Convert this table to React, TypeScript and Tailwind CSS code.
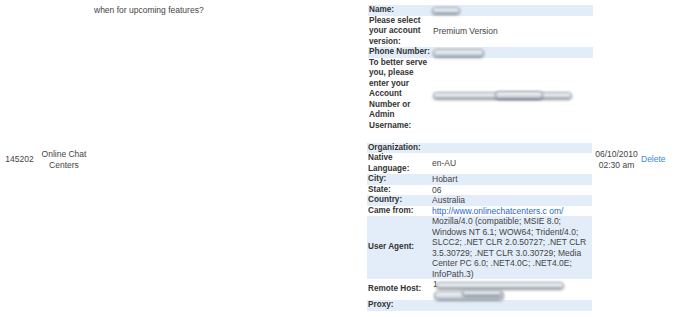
import { ReactNode } from "react";

type Field = {
  label: ReactNode;
  value?: ReactNode;
};

// redacted value, drawn as a soft smeared pill
const Smudge = ({ className }: { className: string }) => (
  <span
    className={`inline-block align-middle rounded-full border border-[#8d96a1] bg-gradient-to-b from-[#f4f6f8] via-[#dfe5eb] to-[#b9c1ca] blur-[0.9px] shadow-[0_1px_2px_rgba(0,0,0,0.4)] ${className}`}
  />
);

const firstFields: Field[] = [
  { label: "Name:", value: <Smudge className="w-[28px] h-[7px] -ml-[1px]" /> },
  {
    label: (
      <>
        Please select
        <br />
        your account
        <br />
        version:
      </>
    ),
    value: "Premium Version",
  },
  { label: "Phone Number:", value: <Smudge className="w-[51px] h-[8px]" /> },
  {
    label: (
      <>
        To better serve
        <br />
        you, please
        <br />
        enter your
        <br />
        Account
        <br />
        Number or
        <br />
        Admin
        <br />
        Username:
      </>
    ),
    value: (
      <span className="relative inline-block w-[140px] h-[10px] align-middle">
        <Smudge className="absolute left-0 top-[2px] w-[139px] h-[7px]" />
        <Smudge className="absolute left-[62px] top-[1px] w-[48px] h-[8px] from-[#d7e6f7] to-[#a9bfd6]" />
      </span>
    ),
  },
];

const secondFields: Field[] = [
  { label: "Organization:" },
  {
    label: (
      <>
        Native
        <br />
        Language:
      </>
    ),
    value: "en-AU",
  },
  { label: "City:", value: "Hobart" },
  { label: "State:", value: "06" },
  { label: "Country:", value: "Australia" },
  {
    label: "Came from:",
    value: (
      <a href="#" className="text-[#2b68cf]">
        http://www.onlinechatcenters.c om/
      </a>
    ),
  },
  {
    label: "User Agent:",
    value: (
      <>
        Mozilla/4.0 (compatible; MSIE 8.0;
        <br />
        Windows NT 6.1; WOW64; Trident/4.0;
        <br />
        SLCC2; .NET CLR 2.0.50727; .NET CLR
        <br />
        3.5.30729; .NET CLR 3.0.30729; Media
        <br />
        Center PC 6.0; .NET4.0C; .NET4.0E;
        <br />
        InfoPath.3)
      </>
    ),
  },
  {
    label: "Remote Host:",
    value: (
      <span className="relative block h-[21px]">
        <span className="absolute left-[1px] top-0 leading-[10.5px]">1</span>
        <Smudge className="absolute left-[4px] top-[3px] w-[128px] h-[7px]" />
        <Smudge className="absolute left-[2px] top-[12px] w-[70px] h-[9px] to-[#a9b2bc]" />
        <Smudge className="absolute left-[30px] top-[11px] w-[40px] h-[6px]" />
      </span>
    ),
  },
  { label: "Proxy:" },
];

const FieldTable = ({ fields }: { fields: Field[] }) => (
  <table className="w-[225px] border-collapse">
    <tbody>
      {fields.map((field, index) => (
        <tr key={index} className={index % 2 === 0 ? "bg-[#e2edf9]" : "bg-white"}>
          <td className="w-[65px] pl-[1px] p-0 align-middle whitespace-nowrap font-bold text-[8.2px] text-[#333]">
            {field.label}
          </td>
          <td className="p-0 align-middle whitespace-nowrap text-[8.5px] text-[#444]">
            {field.value ?? "\u00a0"}
          </td>
        </tr>
      ))}
    </tbody>
  </table>
);

export default function App() {
  return (
    <div className="w-[674px] h-[317px] overflow-hidden bg-white font-['Liberation_Sans',Arial,sans-serif] text-[8.5px] leading-[10.5px] text-[#444]">
      {/* previous message, cut at the top */}
      <div className="flex items-start pt-[5px]">
        <div className="w-[92px]" />
        <div className="w-[276px] pl-[2px]">when for upcoming features?</div>
        <FieldTable fields={firstFields} />
      </div>

      <div className="flex items-start mt-[11.5px]">
        <div className="w-[38px] h-[21px] mt-[6.5px] flex items-center justify-center pl-[1px]">
          145202
        </div>
        <div className="w-[54px] h-[21px] mt-[6.5px] flex items-center justify-center text-center -ml-[1px]">
          Online Chat
          <br />
          Centers
        </div>
        <div className="w-[276px]" />
        <FieldTable fields={secondFields} />
        <div className="w-[49px] h-[21px] mt-[6.5px] flex items-center justify-center text-center">
          06/10/2010
          <br />
          02:30 am
        </div>
        <div className="h-[21px] mt-[6.5px] flex items-center">
          <a href="#" className="text-[#3a86e0]">
            Delete
          </a>
        </div>
      </div>
    </div>
  );
}
